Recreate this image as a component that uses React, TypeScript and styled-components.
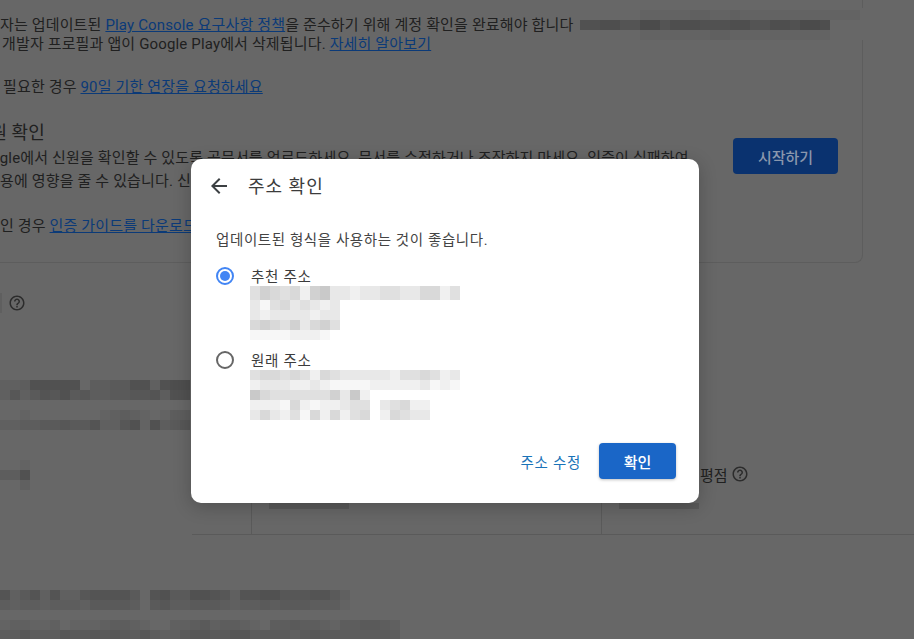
import React from 'react';
import styled, { createGlobalStyle } from 'styled-components';
import { MdArrowBack, MdHelpOutline } from 'react-icons/md';

const GlobalStyle = createGlobalStyle`
  html, body {
    margin: 0;
    padding: 0;
    background: #676767;
    font-family: Roboto, "Noto Sans CJK KR", sans-serif;
  }
`;

const Page = styled.div`
  position: relative;
  width: 914px;
  height: 639px;
  overflow: hidden;
  background: #676767;
  color: #1f1f1f;
  font-size: 15px;
`;

const Card = styled.section`
  box-sizing: border-box;
  display: flex;
  flex-direction: column;
  width: 863px;
  height: 263px;
  padding-top: 15px;
  border-right: 1px solid #5d5d5d;
  border-bottom: 1px solid #5d5d5d;
  border-bottom-right-radius: 8px;
`;

const TextLine = styled.div<{ $top?: number; $shift?: number }>`
  margin-top: ${(p) => p.$top ?? 0}px;
  margin-left: ${(p) => p.$shift ?? 0}px;
  height: 20px;
  line-height: 20px;
  letter-spacing: 0.15px;
  white-space: nowrap;
  color: #202020;
`;

const SectionTitle = styled.h2<{ $top: number; $shift: number }>`
  margin: ${(p) => p.$top}px 0 0 ${(p) => p.$shift}px;
  height: 26px;
  line-height: 28px;
  font-size: 18px;
  font-weight: 400;
  white-space: nowrap;
  color: #202020;
`;

const DimLink = styled.a`
  color: #0b3a78;
  text-decoration: underline;
`;

const StartButton = styled.button`
  position: absolute;
  top: 138px;
  left: 733px;
  width: 105px;
  height: 36px;
  border: 0;
  border-radius: 4px;
  background: #0a326f;
  color: #8a97ad;
  font: 500 15px Roboto, "Noto Sans CJK KR", sans-serif;
`;

const Redaction = styled.div`
  position: absolute;
  top: 8px;
  left: 580px;
  padding: 2px 0 0;
  background: #676767;
`;

const HelpRow = styled.div`
  display: flex;
  align-items: center;
  gap: 6px;
  height: 20px;
  margin-top: 30px;
  color: #2c2c2c;
`;

const HelpMark = styled.span`
  width: 2px;
  height: 20px;
  background: #5f5f5f;
`;

const Section = styled.div<{ $top: number }>`
  margin-top: ${(p) => p.$top}px;
`;

const Lower = styled.div`
  display: grid;
  grid-template-columns: 192px 1fr;
  margin-top: 30px;
`;

const Table = styled.div`
  display: grid;
  grid-template-columns: 59px 350px 1fr;
  height: 75px;
  border-bottom: 1px solid #5a5a5a;
  box-sizing: border-box;
`;

const Cell = styled.div`
  box-sizing: border-box;
  padding: 4px 0 0 17px;
  border-left: 1px solid #5a5a5a;
  &:first-child {
    border-left: 0;
  }
`;

const CellLabel = styled.div<{ $indent?: number }>`
  display: flex;
  align-items: center;
  gap: 3px;
  height: 20px;
  margin-bottom: 19px;
  padding-left: ${(p) => p.$indent ?? 0}px;
  white-space: nowrap;
  color: #202020;
`;

const CellValue = styled.div`
  width: 80px;
  height: 6px;
  background: #5a5a5a;
`;

const Dialog = styled.div`
  position: absolute;
  top: 159px;
  left: 191px;
  box-sizing: border-box;
  width: 508px;
  height: 344px;
  padding: 15px 23px 0 25px;
  border-radius: 10px;
  background: #fff;
  box-shadow: 0 4px 18px rgba(0, 0, 0, 0.22);
`;

const DialogHeader = styled.header`
  display: flex;
  align-items: center;
  gap: 17px;
  height: 24px;
  margin-left: -9px;
  color: #3c4043;
`;

const DialogTitle = styled.h1`
  margin: 0 0 2px;
  font-size: 18px;
  font-weight: 400;
  letter-spacing: 1px;
  color: #3c3c3c;
`;

const Hint = styled.p`
  margin: 32px 0 16px;
  height: 20px;
  line-height: 22px;
  font-size: 14.5px;
  letter-spacing: 0.6px;
  color: #444;
`;

const Option = styled.div`
  display: grid;
  grid-template-columns: 18px 1fr;
  column-gap: 17px;
  margin-bottom: 10px;
`;

const Radio = styled.span<{ $checked?: boolean }>`
  box-sizing: border-box;
  display: flex;
  align-items: center;
  justify-content: center;
  width: 18px;
  height: 18px;
  margin-top: 1px;
  border: 2px solid ${(p) => (p.$checked ? '#4285f4' : '#666')};
  border-radius: 50%;
  &::after {
    content: '';
    display: ${(p) => (p.$checked ? 'block' : 'none')};
    width: 10px;
    height: 10px;
    border-radius: 50%;
    background: #4285f4;
  }
`;

const OptionBody = styled.div`
  display: flex;
  flex-direction: column;
`;

const OptionLabel = styled.div`
  height: 20px;
  line-height: 23px;
  font-size: 14.5px;
  letter-spacing: 0.7px;
  color: #3c3c3c;
`;

const Actions = styled.div`
  display: flex;
  align-items: center;
  justify-content: flex-end;
  gap: 18px;
  margin-top: 23px;
`;

const TextButton = styled.button`
  padding: 0;
  border: 0;
  background: none;
  color: #1a73b8;
  font: 400 14.5px Roboto, "Noto Sans CJK KR", sans-serif;
  letter-spacing: 0.7px;
`;

const PrimaryButton = styled.button`
  width: 77px;
  height: 36px;
  border: 0;
  border-radius: 4px;
  background: #1a66c7;
  box-shadow: 0 1px 3px rgba(0, 0, 0, 0.25);
  color: #fff;
  font: 500 15px Roboto, "Noto Sans CJK KR", sans-serif;
`;

const MosaicBox = styled.div<{ $shift?: number }>`
  display: flex;
  flex-direction: column;
  margin-left: ${(p) => p.$shift ?? 0}px;
`;

const MosaicRow = styled.div<{ $height: number }>`
  display: flex;
  height: ${(p) => p.$height}px;
`;

const MosaicCell = styled.span`
  flex: none;
  width: 10px;
  height: 100%;
`;

// each digit is how dark a 10px block of the redacted text is, '.' is a gap
function Mosaic({ rows, shift, rowHeight = 10 }: { rows: string[]; shift?: number; rowHeight?: number }) {
  return (
    <MosaicBox $shift={shift}>
      {rows.map((row, r) => (
        <MosaicRow key={r} $height={rowHeight}>
          {row.split('').map((c, i) => (
            <MosaicCell key={i} style={{ background: c === '.' ? 'transparent' : `rgba(0,0,0,${Number(c) * 0.03})` }} />
          ))}
        </MosaicRow>
      ))}
    </MosaicBox>
  );
}

const topRedaction = [
  '......1111122112111111111111.',
  '7788669968887778866887998....',
  '......1111111221111111111....',
];

const leftRows = [
  '2237777703344772788',
  '2524657453344556377',
  '...................',
  '0010000000123210133',
  '2233445446225717345',
];

const leftSmall = ['001', '337', '002'];

const bottomRows = [
  '624626225666640674477652667755566420',
  '323323332444430453344432334344433310',
  '',
  '1221120111233210022342332103343321334432',
  '3353335445454353224554466344424544333343',
];

const suggestedTop = ['465452673323344335524'];
const suggestedRest = ['314534323', '323333233', '565463564', '11112221'];
const originalRows = [
  '455454254333332445423',
  '233322321111222223121',
  '754444446372',
  '222152122344.34522',
  '353241525245.25433',
];

export default function App() {
  return (
    <Page>
      <GlobalStyle />

      <Card>
        <TextLine>
          자는 업데이트된 <DimLink>Play Console 요구사항 정책</DimLink>을 준수하기 위해 계정 확인을 완료해야 합니다
        </TextLine>
        <TextLine $top={-1} $shift={2}>
          개발자 프로필과 앱이 Google Play에서 삭제됩니다. <DimLink>자세히 알아보기</DimLink>
        </TextLine>
        <TextLine $top={23} $shift={3}>
          필요한 경우 <DimLink>90일 기한 연장을 요청하세요</DimLink>
        </TextLine>
        <SectionTitle $top={22} $shift={-26}>
          신원 확인
        </SectionTitle>
        <TextLine $top={3} $shift={-28}>
          Google에서 신원을 확인할 수 있도록 공문서를 업로드하세요. 문서를 수정하거나 조작하지 마세요. 인증이 실패하여
        </TextLine>
        <TextLine $top={3}>용에 영향을 줄 수 있습니다. 신</TextLine>
        <TextLine $top={25}>
          인 경우 <DimLink>인증 가이드를 다운로드</DimLink>
        </TextLine>
      </Card>

      <Redaction>
        <Mosaic rows={topRedaction} />
      </Redaction>
      <StartButton>시작하기</StartButton>

      <HelpRow>
        <HelpMark />
        <MdHelpOutline size={18} />
      </HelpRow>

      <Section $top={67}>
        <Mosaic rows={leftRows} />
      </Section>

      <Lower>
        <Mosaic rows={leftSmall} />
        <Table>
          <Cell />
          <Cell>
            <CellLabel />
            <CellValue />
          </Cell>
          <Cell>
            <CellLabel $indent={81}>
              평점
              <MdHelpOutline size={18} color="#2c2c2c" />
            </CellLabel>
            <CellValue />
          </Cell>
        </Table>
      </Lower>

      <Section $top={55}>
        <Mosaic rows={bottomRows} />
      </Section>

      <Dialog>
        <DialogHeader>
          <MdArrowBack size={24} />
          <DialogTitle>주소 확인</DialogTitle>
        </DialogHeader>
        <Hint>업데이트된 형식을 사용하는 것이 좋습니다.</Hint>
        <Option>
          <Radio $checked />
          <OptionBody>
            <OptionLabel>추천 주소</OptionLabel>
            <Mosaic rows={suggestedTop} shift={-1} rowHeight={14} />
            <Mosaic rows={suggestedRest} shift={-1} />
          </OptionBody>
        </Option>
        <Option>
          <Radio />
          <OptionBody>
            <OptionLabel>원래 주소</OptionLabel>
            <Mosaic rows={originalRows} shift={-1} />
          </OptionBody>
        </Option>
        <Actions>
          <TextButton>주소 수정</TextButton>
          <PrimaryButton>확인</PrimaryButton>
        </Actions>
      </Dialog>
    </Page>
  );
}
